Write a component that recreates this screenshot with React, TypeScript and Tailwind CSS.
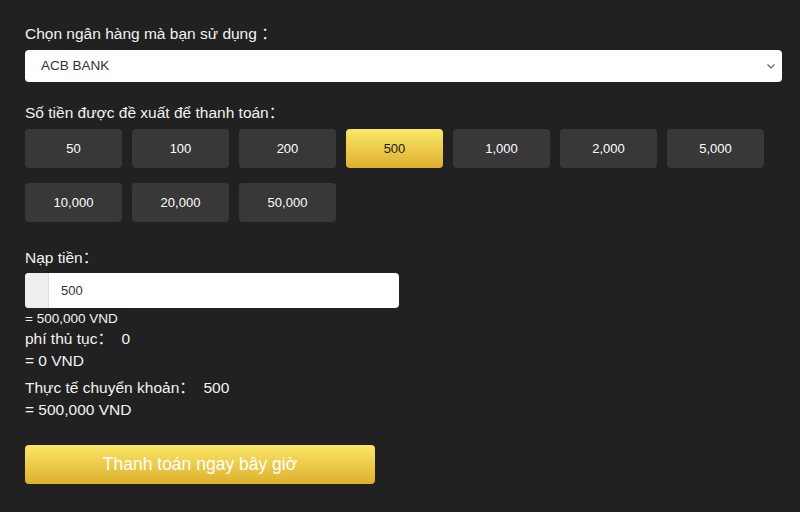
import React from "react";

const amounts = ["50", "100", "200", "500", "1,000", "2,000", "5,000", "10,000", "20,000", "50,000"];

export default function App() {
  const selected = "500";
  return (
    <div
      className="w-[800px] h-[512px] bg-[#212121] text-[#f2f2f2] pl-[25px] pr-[18px] pt-[24px] overflow-hidden"
      style={{ fontFamily: '"Liberation Sans", "Noto Sans CJK SC", Arial, sans-serif' }}
    >
      <div className="text-[15.5px] leading-[20px]">Chọn ngân hàng mà bạn sử dụng ：</div>
      <div className="mt-[6px] h-[32px] bg-white rounded-[4px] flex items-center justify-between pl-[16px] pr-[6px] text-[13.5px] text-[#333]">
        <span>ACB BANK</span>
        <svg width="10" height="10" viewBox="0 0 10 10" fill="none" stroke="#666" strokeWidth="1.2">
          <path d="M1.5 3.5 L5 7 L8.5 3.5" />
        </svg>
      </div>

      <div className="mt-[21px] text-[15.5px] leading-[20px]">Số tiền được đề xuất để thanh toán：</div>
      <div className="mt-[6px] flex flex-wrap gap-x-[10px] gap-y-[15px] w-[745px]">
        {amounts.map((a) =>
          a === selected ? (
            <div
              key={a}
              className="w-[97px] h-[39px] rounded-[4px] flex items-center justify-center text-[13px] text-[#1a1a1a] bg-gradient-to-b from-[#fbe766] to-[#ddb02c]"
            >
              {a}
            </div>
          ) : (
            <div
              key={a}
              className="w-[97px] h-[39px] rounded-[4px] flex items-center justify-center text-[13px] text-white bg-[#383838]"
            >
              {a}
            </div>
          )
        )}
      </div>

      <div className="mt-[26px] text-[15.5px] leading-[20px]">Nạp tiền：</div>
      <div className="mt-[5px] w-[374px] h-[35px] bg-white rounded-[4px] flex overflow-hidden">
        <div className="w-[24px] bg-[#eeeeee] border-r border-[#dddddd]"></div>
        <div className="flex items-center pl-[12px] text-[13px] text-[#333]">500</div>
      </div>
      <div className="mt-[2px] text-[13.5px] leading-[18px]">= 500,000 VND</div>
      <div className="text-[15.5px] leading-[22px]">phí thủ tục：&nbsp;&nbsp;0</div>
      <div className="text-[15.5px] leading-[22px]">= 0 VND</div>
      <div className="mt-[5px] text-[15.5px] leading-[22px]">Thực tế chuyển khoản：&nbsp;&nbsp;500</div>
      <div className="text-[15.5px] leading-[22px]">= 500,000 VND</div>

      <div className="mt-[24px] w-[350px] h-[39px] rounded-[4px] flex items-center justify-center text-[17.5px] text-white bg-gradient-to-b from-[#fbe766] to-[#ddb02c]">
        Thanh toán ngay bây giờ
      </div>
    </div>
  );
}
